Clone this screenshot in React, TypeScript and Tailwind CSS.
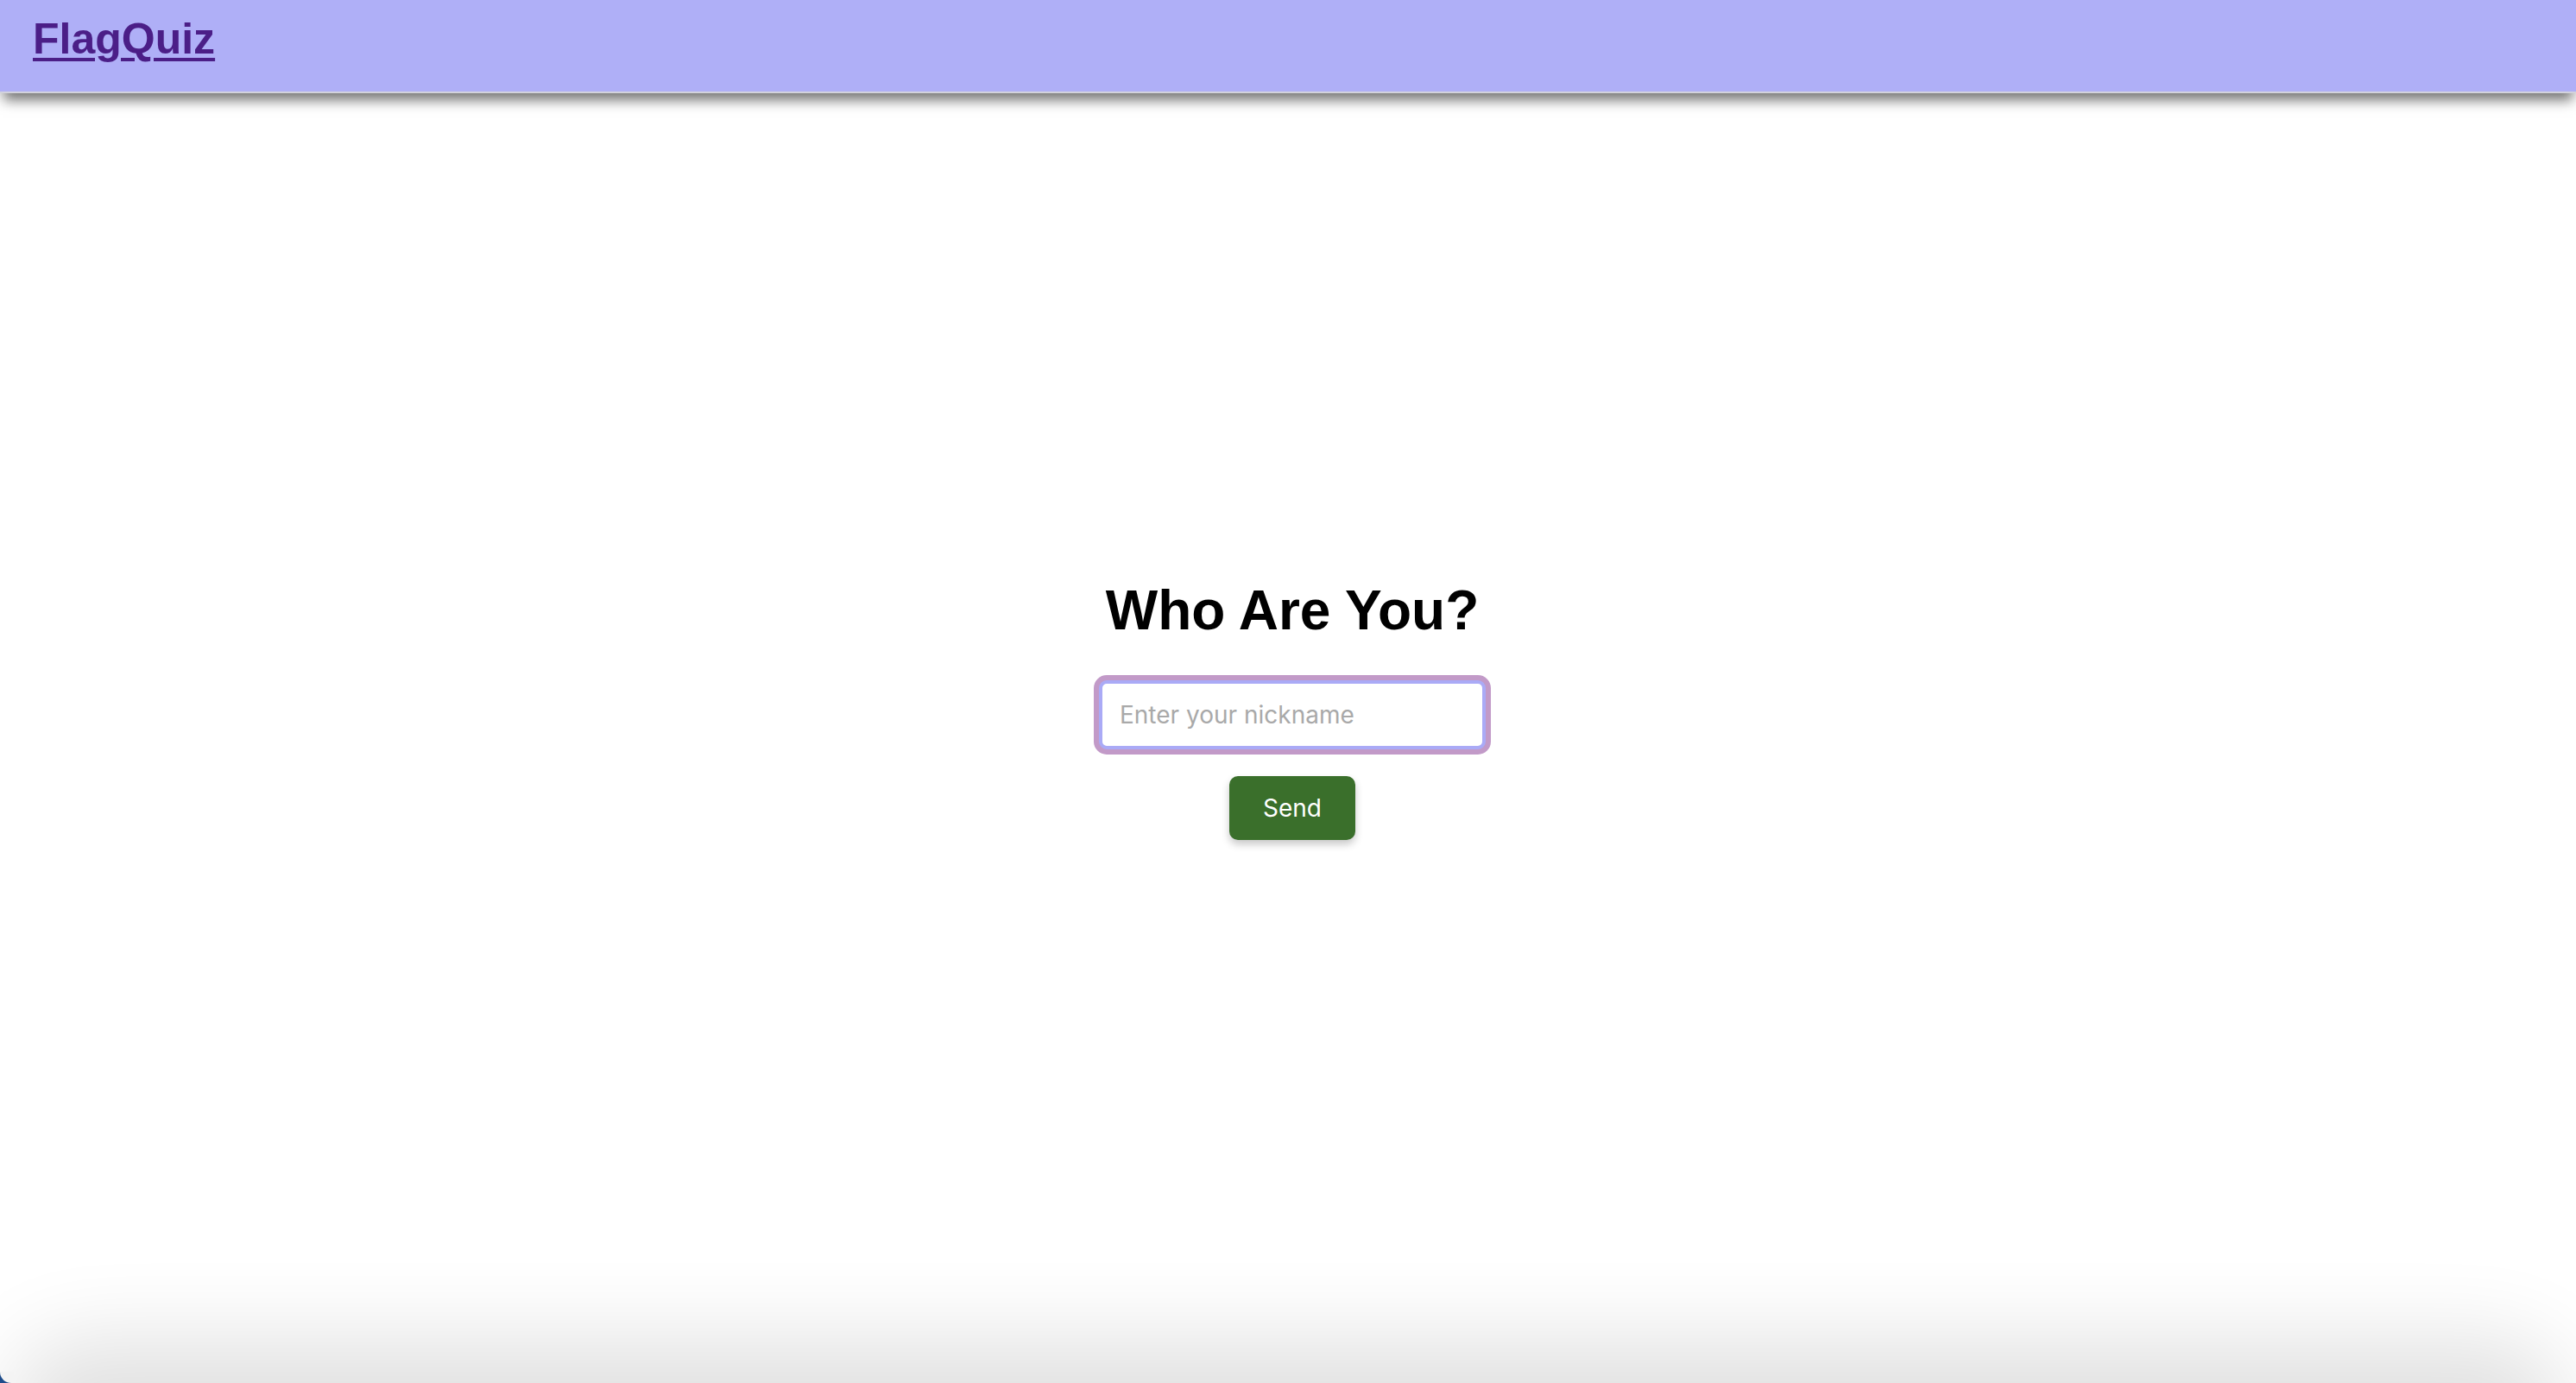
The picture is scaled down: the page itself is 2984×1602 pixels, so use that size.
import React, { useState } from 'react';

const App: React.FC = () => {
  const [nickname, setNickname] = useState('');

  return (
    <div className="relative min-h-screen flex flex-col bg-white overflow-hidden font-['Liberation_Sans',Arial,sans-serif]">
      <header className="relative z-10 h-[108px] bg-[#afaff7] border-b-2 border-[#d2d2dc] shadow-[0_12px_14px_-4px_rgba(0,0,0,0.55)] px-[38px] pt-[17px]">
        <a href="#" className="text-[50px] leading-[1.15] font-bold text-[#4b1e87] underline decoration-[4px] underline-offset-[5px]">
          FlagQuiz
        </a>
      </header>

      <main className="flex-1 flex flex-col items-center justify-center pb-[66px] pl-[10px]">
        <h1 className="text-[64px] leading-[1.15] font-bold text-black">Who Are You?</h1>
        <input
          value={nickname}
          onChange={e => setNickname(e.target.value)}
          placeholder="Enter your nickname"
          className="mt-[43px] w-[448px] h-[80px] px-[20px] rounded-[9px] border-4 border-[#aaaaf6] shadow-[0_0_0_6px_#c29ac8] outline-none bg-white font-['Inter',sans-serif] text-[28px] text-black placeholder:text-[#a9a9a9]"
        />
        <button className="mt-[31px] w-[146px] h-[74px] rounded-[10px] bg-[#3a6f2b] text-white font-['Inter',sans-serif] text-[28px] shadow-[0_5px_10px_rgba(0,0,0,0.22)]">
          Send
        </button>
      </main>

      {/* window edge shading at the bottom */}
      <div className="pointer-events-none absolute left-[60px] right-[60px] bottom-[-70px] h-[70px] rounded-full shadow-[0_0_100px_50px_rgba(0,0,0,0.12)]" />
      <div className="pointer-events-none absolute left-0 bottom-0 w-[16px] h-[13px] bg-[#1e4c8b]">
        <div className="w-full h-full bg-[#f4f4f4] rounded-bl-[16px]" />
      </div>
    </div>
  );
};

export default App;
